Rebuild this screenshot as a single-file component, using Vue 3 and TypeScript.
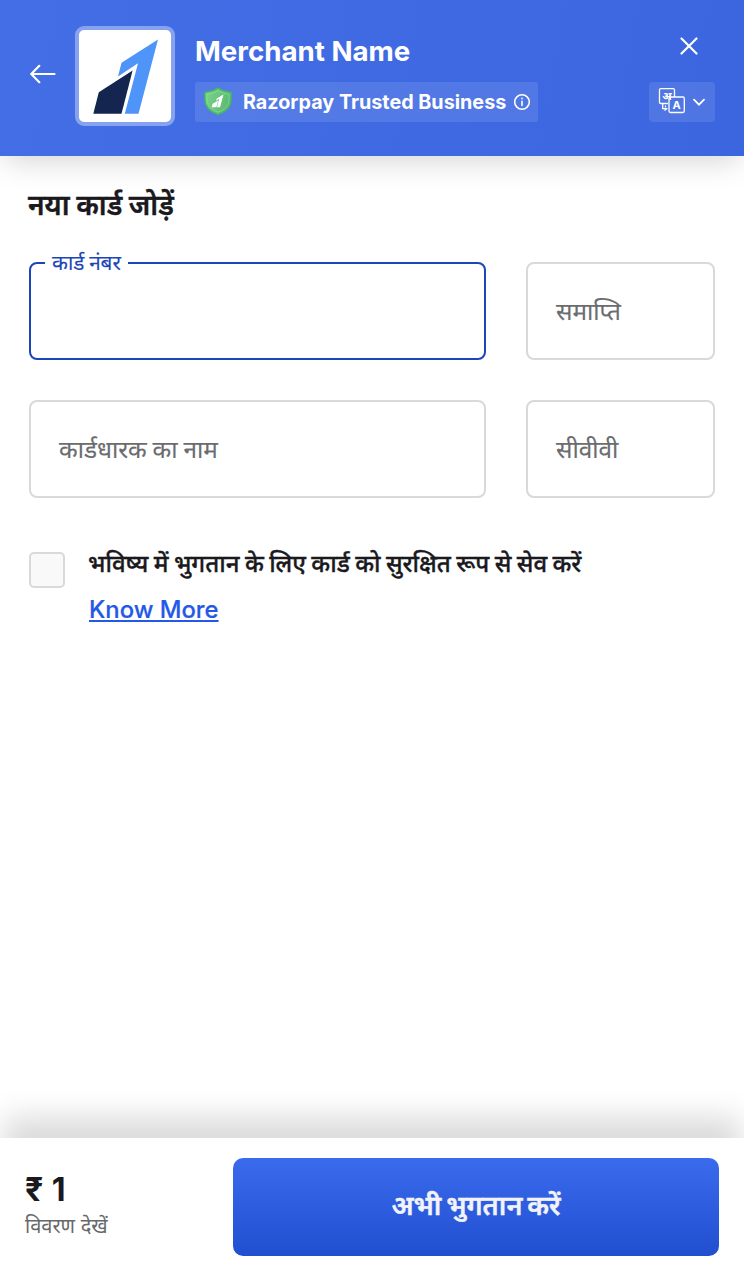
<script setup lang="ts">
interface Field {
  id: string
  label: string
  active?: boolean
}

const fields: Field[] = [
  { id: 'number', label: 'कार्ड नंबर', active: true },
  { id: 'expiry', label: 'समाप्ति' },
  { id: 'name', label: 'कार्डधारक का नाम' },
  { id: 'cvv', label: 'सीवीवी' },
]
</script>

<template>
  <div class="checkout">
    <header class="header">
      <svg class="back" width="26" height="20" viewBox="0 0 26 20">
        <path d="M24.5 10H1.5M9.3 1.8L1.2 10l8.1 8.2" />
      </svg>
      <div class="logo">
        <svg width="92" height="92" viewBox="79 30 92 92">
          <path fill="#4f94f8" d="M158 39.500L138.500 113.800H124.800L138 63.200L118 76.500L121.500 62.800Z" />
          <path fill="#14264f" d="M132.600 70.500L121.500 113.800H93.300L98.800 92.200Z" />
        </svg>
      </div>
      <div class="merchant">
        <h1>Merchant Name</h1>
        <div class="trusted">
          <svg class="shield" width="30" height="30" viewBox="0 0 30 30">
            <defs>
              <linearGradient id="shieldFill" x1="0" x2="1" y1="0" y2="0.4">
                <stop offset="0" stop-color="#7bd68d" />
                <stop offset="1" stop-color="#5cba70" />
              </linearGradient>
            </defs>
            <path d="M15 2.200C18.800 4.700 23 6 28 6.400V13c0 7.400-4.200 12.300-13 15.400C6.200 25.300 2 20.400 2 13V6.400C7 6 11.200 4.700 15 2.200Z" fill="url(#shieldFill)" stroke="#48b865" stroke-width="1.400" />
            <path d="M15 4.500C18.400 6.500 22 7.700 26 8.100v5c0 6.200-3.600 10.400-11 13.100C7.600 23.500 4 19.300 4 13.100v-5C8 7.700 11.600 6.500 15 4.500Z" fill="none" stroke="#8ee09c" stroke-width=".6" />
            <path d="M20.500 8.500L17 21.200h-3l2.200-8.500-3.200 2 .7-2.300ZM15.200 14.500l-1.800 6.700H8.700l1-3.500Z" fill="#fff" />
          </svg>
          <span>Razorpay Trusted Business</span>
          <svg class="info" width="18" height="18" viewBox="0 0 18 18">
            <circle cx="9" cy="9" r="7.300" />
            <path d="M9 8.200v4.300M9 5.300v.4" />
          </svg>
        </div>
      </div>
      <div class="actions">
        <svg class="close" width="18" height="18" viewBox="0 0 18 18">
          <path d="M1.500 1.500l15 15M16.500 1.500l-15 15" />
        </svg>
        <div class="language">
          <svg width="27" height="26" viewBox="0 0 27 26">
            <g fill="none" stroke="#fff" stroke-width="1.300">
              <path d="M10 15.500H2.700A1.200 1.200 0 0 1 1.500 14.300V1.800A1.200 1.200 0 0 1 2.700.7h12.600A1.200 1.200 0 0 1 16.500 1.900V9M4.700 16v4.600H9.500M7.500 17.500v2M6.500 22.500l2-1.500" />
              <rect x="11" y="9" width="15.300" height="15.500" rx="1.400" />
            </g>
            <text x="4.200" y="11.600" class="hindi">अ</text>
            <text x="18.600" y="20.800" class="latin" text-anchor="middle">A</text>
          </svg>
          <svg class="chevron" width="12" height="8" viewBox="0 0 12 8"><path d="M1 1.700l5 5 5-5" /></svg>
        </div>
      </div>
    </header>

    <main class="content">
      <h2>नया कार्ड जोड़ें</h2>
      <div class="fields">
        <div v-for="field in fields" :key="field.id" class="field" :class="[field.id, { active: field.active }]">
          <span>{{ field.label }}</span>
        </div>
      </div>
      <div class="save">
        <div class="checkbox"></div>
        <div>
          <p>भविष्य में भुगतान के लिए कार्ड को सुरक्षित रूप से सेव करें</p>
          <a>Know More</a>
        </div>
      </div>
    </main>

    <footer class="footer">
      <div class="amount">
        <strong>₹ 1</strong>
        <span>विवरण देखें</span>
      </div>
      <button type="button"><span>अभी भुगतान करें</span></button>
    </footer>
  </div>
</template>

<style>
body {
  margin: 0;
  background: #fff;
}
</style>

<style scoped>
.checkout {
  display: flex;
  flex-direction: column;
  width: 744px;
  height: 1270px;
  overflow: hidden;
  background: #fff;
  color: #19191e;
  font-family: Inter, "Noto Sans", sans-serif;
}
.checkout * {
  box-sizing: border-box;
  white-space: nowrap;
}
svg {
  display: block;
  flex: none;
}
h1, h2, p {
  margin: 0;
}
.header {
  display: flex;
  flex: none;
  height: 156px;
  padding: 26px 29px 0 30px;
  background: linear-gradient(100deg, #436ee6, #3c66df);
  box-shadow: 0 10px 28px -5px rgba(0, 0, 0, .17);
  color: #fff;
}
.back, .close, .chevron, .info {
  fill: none;
  stroke: #fff;
  stroke-width: 2.200;
  stroke-linecap: round;
}
.back {
  margin: 38px 19px 0 0;
}
.logo {
  flex: none;
  width: 100px;
  height: 100px;
  border: 4px solid #87a2ee;
  border-radius: 9px;
  background: #fff;
}
.merchant {
  margin-left: 20px;
}
h1 {
  height: 56px;
  font-size: 27.700px;
  font-weight: 700;
  line-height: 51px;
}
.trusted {
  display: flex;
  align-items: center;
  width: 343px;
  height: 40px;
  padding-left: 8px;
  border-radius: 2px;
  background: rgba(255, 255, 255, .1);
  font-size: 19.750px;
  font-weight: 700;
}
.shield {
  margin-top: -2px;
}
.trusted span {
  width: 270px;
  margin-left: 10px;
}
.info {
  stroke-width: 1.600;
}
.actions {
  display: flex;
  flex-direction: column;
  align-items: flex-end;
  margin-left: auto;
}
.close {
  margin: 11px 17px 27px 0;
}
.language {
  display: flex;
  align-items: center;
  gap: 8px;
  width: 66px;
  height: 40px;
  padding-left: 9px;
  border-radius: 4px;
  background: rgba(255, 255, 255, .1);
}
.language svg:first-child {
  margin-top: -2px;
}
.hindi {
  fill: #fff;
  font: 700 11px "Noto Sans", sans-serif;
}
.latin {
  fill: #fff;
  font: 700 11px Inter, sans-serif;
}
.chevron {
  stroke-width: 1.800;
}
.content {
  flex: 1;
  padding: 28px 29px 0;
}
h2 {
  height: 78px;
  margin-left: -1px;
  font-size: 28px;
  font-weight: 600;
  line-height: 42px;
  word-spacing: -.5px;
  -webkit-text-stroke: .4px;
}
.fields {
  display: grid;
  grid-template-columns: 457px 189px;
  gap: 40px;
}
.field {
  display: flex;
  align-items: center;
  height: 98px;
  padding-left: 28px;
  border: 2px solid #d9d9d9;
  border-radius: 8px;
  color: #6b6c6f;
  font-size: 24.300px;
  word-spacing: -1px;
  -webkit-text-stroke: .15px;
}
.field:not(.active) span {
  margin-top: -2px;
}
.active {
  align-items: flex-start;
  padding-left: 14px;
  border-color: #1b46b8;
  color: #1b46b8;
  font-size: 20.700px;
}
.active span {
  margin-top: -15px;
  padding: 0 7px;
  background: #fff;
  line-height: 28px;
}
.save {
  display: flex;
  gap: 24px;
  padding-top: 46px;
}
.checkbox {
  width: 36px;
  height: 36px;
  margin-top: 8px;
  border: 2px solid #d9d9d9;
  border-radius: 5px;
  background: #f9f9f9;
}
p {
  height: 46px;
  margin-left: -1px;
  font-size: 24px;
  font-weight: 500;
  line-height: 40px;
  word-spacing: -1px;
  -webkit-text-stroke: .35px;
}
a {
  display: block;
  color: #2459e8;
  font-size: 23.800px;
  font-weight: 500;
  line-height: 40px;
  text-decoration: underline;
  text-decoration-thickness: 2px;
  text-underline-offset: 2px;
  -webkit-text-stroke: .2px;
}
.footer {
  display: flex;
  flex: none;
  height: 132px;
  padding: 20px 25px 0;
  background: #fff;
  box-shadow: 0 -25px 28px -4px rgba(0, 0, 0, .145);
}
.amount {
  display: flex;
  flex-direction: column;
  width: 208px;
}
strong {
  height: 50px;
  font-size: 32px;
  font-weight: 700;
  line-height: 64px;
  word-spacing: 1px;
}
.amount span {
  color: #68696c;
  font-size: 20px;
  line-height: 37px;
}
button {
  width: 486px;
  height: 98px;
  padding: 0 0 5px;
  border: 0;
  border-radius: 10px;
  background: linear-gradient(#3b6bed, #2050d0);
  color: #f2f3f8;
  font: 600 27px Inter, "Noto Sans", sans-serif;
  word-spacing: -2px;
  -webkit-text-stroke: .4px;
}
</style>
